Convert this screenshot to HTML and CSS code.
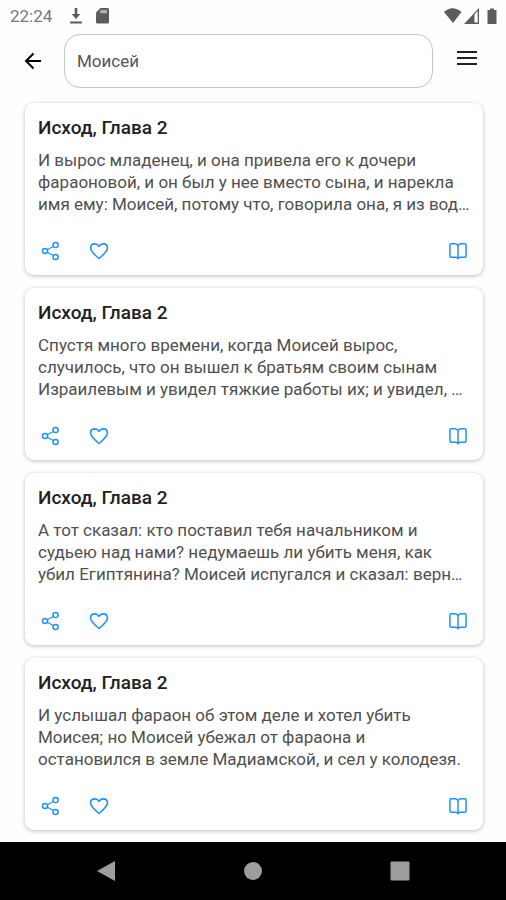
FILE: index.html
```html
<!DOCTYPE html>
<html lang="ru">
<head>
<meta charset="utf-8">
<meta name="viewport" content="width=device-width, initial-scale=1">
<title>Моисей</title>
<link rel="stylesheet" href="styles.css">
</head>
<body>
<svg class="sprite" aria-hidden="true">
  <symbol id="share" viewBox="0 0 24 24"><g fill="none" stroke="currentColor" stroke-width="1.600"><circle cx="5.500" cy="12" r="2.800"/><circle cx="17" cy="5.500" r="2.800"/><circle cx="17" cy="18.500" r="2.800"/><path stroke-width="1.200" d="M8 10.600 14.500 7M8 13.400l6.500 3.600"/></g></symbol>
  <symbol id="heart" viewBox="0 0 24 24"><path fill="none" stroke="currentColor" stroke-width="1.700" stroke-linejoin="round" d="M12 20.200C9 17.500 2.800 13 2.800 8.800 2.800 6 4.800 4.200 7.400 4.200c2 0 3.700 1.100 4.600 2.700.9-1.600 2.600-2.700 4.600-2.700 2.600 0 4.600 1.800 4.600 4.600 0 4.200-6.200 8.700-9.200 11.400z"/></symbol>
  <symbol id="book" viewBox="0 0 24 24"><path fill="none" stroke="currentColor" stroke-width="1.600" stroke-linejoin="round" d="M12 6.200C11.500 4.800 10.500 4 9 4H4.500Q3.200 4 3.200 5.300V17.500Q3.200 18.800 4.500 18.800H9.500Q11.500 18.800 12 20.500 12.500 18.800 14.500 18.800H19.500Q20.800 18.800 20.800 17.500V5.300Q20.800 4 19.500 4H15C13.500 4 12.500 4.800 12 6.200V20.500"/></symbol>
</svg>
<div class="screen">
  <div class="status">
    <span class="clock">22:24</span>
    <svg width="12" height="16" viewBox="0 0 12 16"><path d="M4.700 0h2.600v6h3L6 11 1.700 6h3zM0 13.500h12v2H0z"/></svg>
    <svg width="13" height="16" viewBox="0 0 13 16"><path d="M4.500 0H11.500Q13 0 13 1.500V14Q13 15.500 11.500 15.500H1.500Q0 15.500 0 14V4.500z"/><path class="contacts" d="M4.500 2H11v3.200H4z"/></svg>
    <svg class="signal" width="54" height="17" viewBox="0 0 54 17"><path d="M0 4Q8.500-3.500 17.500 4L9 15zM35 0V16H20zM43.500 2H46V.5h4V2h2.500V16h-9z"/><path fill="#fff" d="M30.500 6.500 33.700 3V14.500h-3.200z"/></svg>
  </div>
  <header class="header">
    <button class="back" type="button" aria-label="Назад"><svg width="18" height="18" viewBox="0 0 18 18"><path d="M9.500 1.500 2 9l7.500 7.500M2 9h15" fill="none" stroke="currentColor" stroke-width="2"/></svg></button>
    <input class="search" type="text" aria-label="Поиск" value="Моисей">
    <button class="menu" type="button" aria-label="Меню"><svg width="20" height="16" viewBox="0 0 20 16"><path d="M0 2h20M0 8h20M0 14h20" stroke="currentColor" stroke-width="2"/></svg></button>
  </header>
  <main class="list">
    <article class="card">
      <h2>Исход, Глава 2</h2>
      <p>И вырос младенец, и она привела его к дочери<br>фараоновой, и он был у нее вместо сына, и нарекла<br>имя ему: Моисей, потому что, говорила она, я из вод…</p>
      <div class="actions">
        <button type="button" aria-label="Поделиться"><svg><use href="#share"/></svg></button>
        <button type="button" aria-label="В избранное"><svg><use href="#heart"/></svg></button>
        <button class="read" type="button" aria-label="Читать"><svg><use href="#book"/></svg></button>
      </div>
    </article>
    <article class="card">
      <h2>Исход, Глава 2</h2>
      <p>Спустя много времени, когда Моисей вырос,<br>случилось, что он вышел к братьям своим сынам<br>Израилевым и увидел тяжкие работы их; и увидел, …</p>
      <div class="actions">
        <button type="button" aria-label="Поделиться"><svg><use href="#share"/></svg></button>
        <button type="button" aria-label="В избранное"><svg><use href="#heart"/></svg></button>
        <button class="read" type="button" aria-label="Читать"><svg><use href="#book"/></svg></button>
      </div>
    </article>
    <article class="card">
      <h2>Исход, Глава 2</h2>
      <p>А тот сказал: кто поставил тебя начальником и<br>судьею над нами? недумаешь ли убить меня, как<br>убил Египтянина? Моисей испугался и сказал: верн…</p>
      <div class="actions">
        <button type="button" aria-label="Поделиться"><svg><use href="#share"/></svg></button>
        <button type="button" aria-label="В избранное"><svg><use href="#heart"/></svg></button>
        <button class="read" type="button" aria-label="Читать"><svg><use href="#book"/></svg></button>
      </div>
    </article>
    <article class="card">
      <h2>Исход, Глава 2</h2>
      <p>И услышал фараон об этом деле и хотел убить<br>Моисея; но Моисей убежал от фараона и<br>остановился в земле Мадиамской, и сел у колодезя.</p>
      <div class="actions">
        <button type="button" aria-label="Поделиться"><svg><use href="#share"/></svg></button>
        <button type="button" aria-label="В избранное"><svg><use href="#heart"/></svg></button>
        <button class="read" type="button" aria-label="Читать"><svg><use href="#book"/></svg></button>
      </div>
    </article>
  </main>
  <nav class="nav">
    <button type="button" aria-label="Назад"><svg width="20" height="22" viewBox="0 0 20 22"><path d="M19 1v20L1 11z"/></svg></button>
    <button type="button" aria-label="Домой"><svg width="20" height="20" viewBox="0 0 20 20"><circle cx="10" cy="10" r="9"/></svg></button>
    <button type="button" aria-label="Недавние"><svg width="20" height="20" viewBox="0 0 20 20"><rect x="0.500" y="0.500" width="19" height="19" rx="1"/></svg></button>
  </nav>
</div>
</body>
</html>
```
FILE: styles.css
```css
* { box-sizing: border-box; }
body {
  margin: 0;
  background: #fefefe;
  color: #222;
  font-family: Roboto, "Noto Sans", sans-serif;
}
.sprite { position: absolute; width: 0; height: 0; }
svg { display: block; }
button {
  display: flex;
  align-items: center;
  justify-content: center;
  padding: 0;
  border: 0;
  background: none;
  color: inherit;
}
.screen {
  display: flex;
  flex-direction: column;
  min-height: 100vh;
}
.status {
  display: flex;
  align-items: center;
  gap: 14px;
  height: 32px;
  padding: 0 8px 0 10px;
  color: #777;
  fill: #5c5c5c;
}
.clock { font-size: 17px; line-height: 20px; margin-right: 4px; }
.contacts { fill: #b0b0b0; }
.signal { margin-left: auto; }
.header {
  display: flex;
  align-items: center;
  padding: 2px 29px 0 24px;
}
.back { color: #000; }
.search {
  flex: 1;
  min-width: 0;
  height: 54px;
  margin: 0 24px 0 22px;
  padding: 0 12px;
  border: 1px solid #c4c4c4;
  border-radius: 16px;
  background: #fff;
  color: #555;
  font: 17px Roboto, "Noto Sans", sans-serif;
}
.menu { padding-bottom: 7px; }
.list {
  display: flex;
  flex-direction: column;
  gap: 13px;
  flex: 1;
  padding: 15px 23px 12px 25px;
}
.card {
  padding: 12px 13px;
  border-radius: 9px;
  background: #fff;
  box-shadow: 0 1px 4px rgba(0, 0, 0, 0.26);
}
.card h2 {
  margin: 0 0 8px;
  font-size: 19px;
  line-height: 26px;
  font-weight: 500;
}
.card p {
  margin: 0;
  color: #505050;
  font-size: 17px;
  line-height: 22px;
  white-space: nowrap;
}
.actions {
  display: flex;
  gap: 24px;
  margin-top: 24px;
  padding-left: 1px;
  color: #1e90ff;
}
.actions svg { width: 22px; height: 22px; }
.actions button { width: 24px; height: 24px; }
.actions .read { margin-left: auto; }
.nav {
  display: flex;
  align-items: center;
  height: 58px;
  padding: 0 33px;
  background: #000;
  fill: #9d9d9d;
}
.nav button { flex: 1; }
```
